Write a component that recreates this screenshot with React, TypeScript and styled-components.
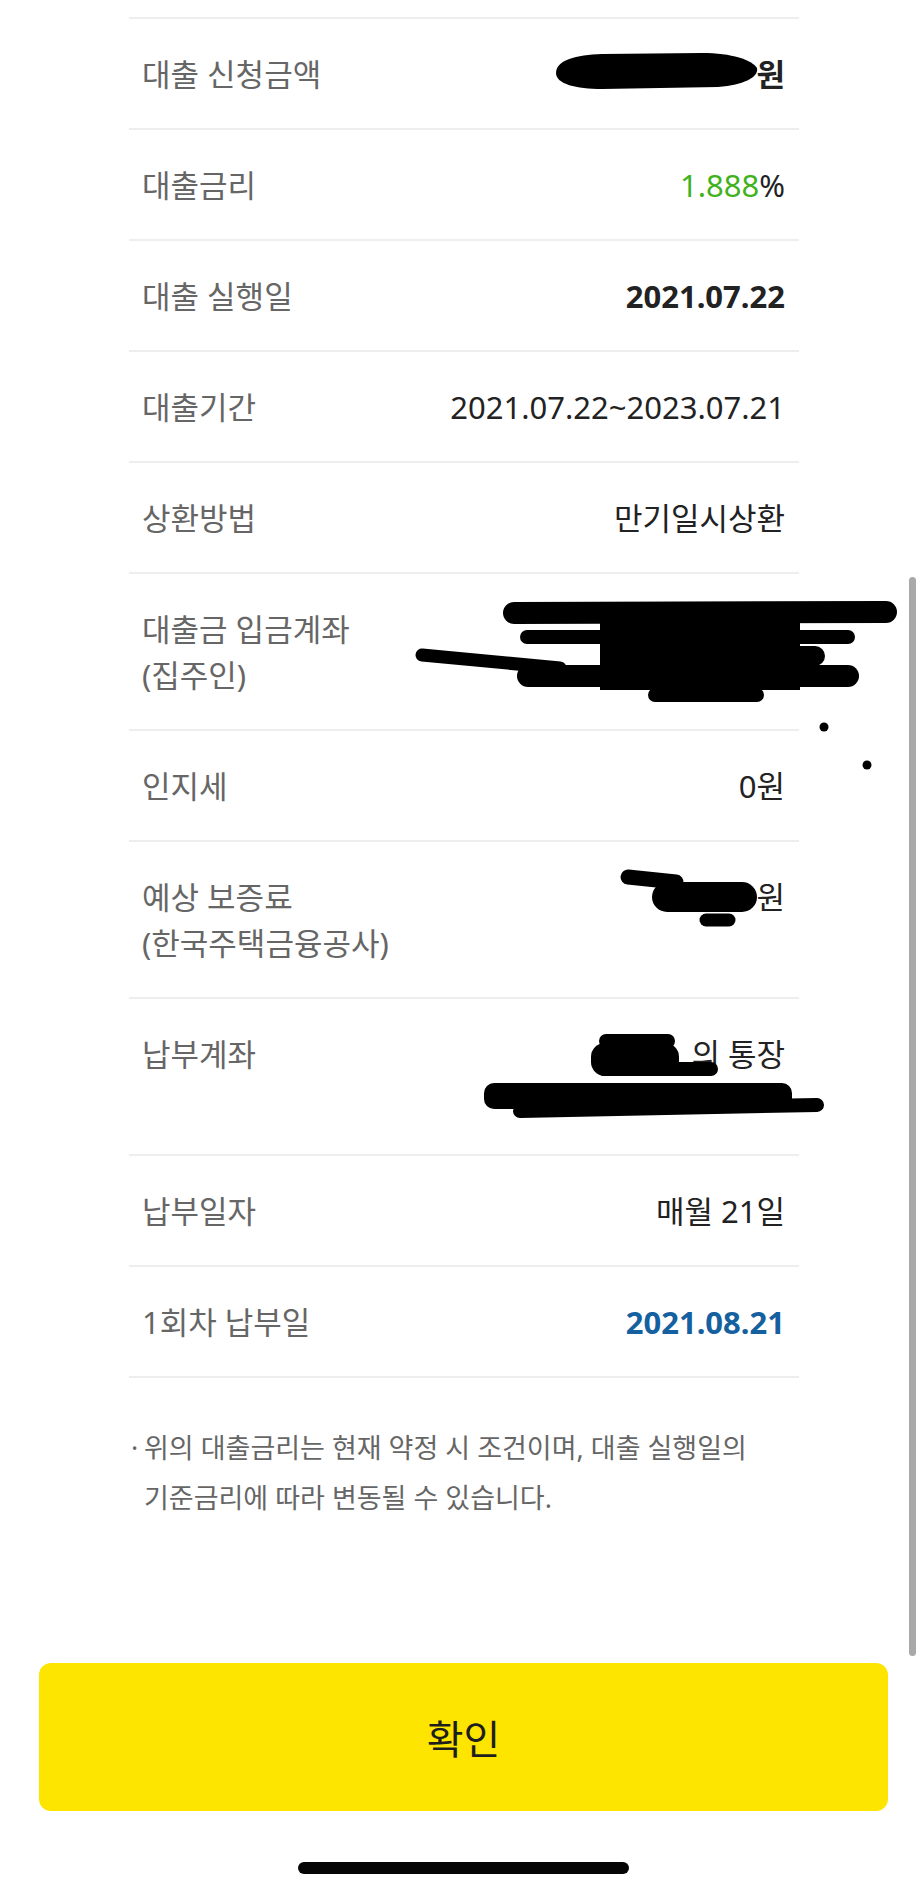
import React from "react";
import styled, { createGlobalStyle } from "styled-components";

const GlobalStyle = createGlobalStyle`
  body {
    margin: 0;
    background: #ffffff;
    font-family: "Noto Sans", "Noto Sans CJK KR", sans-serif;
    overflow: hidden;
  }
`;

const Page = styled.div`
  position: relative;
  width: 922px;
  height: 1895px;
  padding-top: 17px;
  box-sizing: border-box;
  display: flex;
  flex-direction: column;
  background: #ffffff;
`;

const List = styled.div`
  margin-left: 129px;
  width: 670px;
  border-top: 2px solid #eeeeee;
`;

const Row = styled.div`
  display: flex;
  justify-content: space-between;
  align-items: flex-start;
  padding: 32px 14px 31px 13px;
  border-bottom: 2px solid #eeeeee;
  font-size: 31px;
  line-height: 46px;
`;

const Label = styled.div`
  color: #666666;
`;

const Value = styled.div<{ $tone?: "bold" | "green" | "blue" }>`
  text-align: right;
  color: ${({ $tone }) => ($tone === "blue" ? "#15609f" : "#222222")};
  font-weight: ${({ $tone }) => ($tone === "bold" || $tone === "blue" ? 700 : 400)};
`;

const Green = styled.span`
  color: #3fb21c;
`;

const Note = styled.div`
  display: flex;
  margin-left: 129px;
  width: 670px;
  padding-top: 45px;
  font-size: 27px;
  line-height: 50px;
  color: #666666;
`;

const Bullet = styled.span`
  width: 13px;
  flex-shrink: 0;
  padding-left: 2px;
`;

const ConfirmButton = styled.button`
  margin: 140px 0 0 39px;
  width: 849px;
  height: 148px;
  border: none;
  border-radius: 12px;
  background: #fee500;
  color: #1e1e1e;
  font-family: "Noto Sans", "Noto Sans CJK KR", sans-serif;
  font-size: 40px;
`;

const HomeBar = styled.div`
  margin: 51px 0 0 298px;
  width: 331px;
  height: 12px;
  border-radius: 6px;
  background: #050505;
`;

const ScrollThumb = styled.div`
  position: absolute;
  left: 909px;
  top: 577px;
  width: 7px;
  height: 1079px;
  border-radius: 4px;
  background: #a9a9a9;
`;

const Scribbles = styled.svg`
  position: absolute;
  left: 0;
  top: 0;
  pointer-events: none;
`;

type Item = { label: React.ReactNode; value?: React.ReactNode; tone?: "bold" | "green" | "blue" };

const items: Item[] = [
  { label: "대출 신청금액", value: "원", tone: "bold" },
  { label: "대출금리", value: <><Green>1.888</Green>%</> },
  { label: "대출 실행일", value: "2021.07.22", tone: "bold" },
  { label: "대출기간", value: "2021.07.22~2023.07.21" },
  { label: "상환방법", value: "만기일시상환" },
  { label: <>대출금 입금계좌<br />(집주인)</> },
  { label: "인지세", value: "0원" },
  { label: <>예상 보증료<br />(한국주택금융공사)</>, value: "원" },
  { label: "납부계좌", value: <>의 통장<br />&nbsp;</> },
  { label: "납부일자", value: "매월 21일" },
  { label: "1회차 납부일", value: "2021.08.21", tone: "blue" },
];

// the marker strokes that hide personal data in the screenshot
const Redactions = () => (
  <Scribbles width={922} height={1895} viewBox="0 0 922 1895">
    <g fill="#000" stroke="#000" strokeLinecap="round">
      <path
        stroke="none"
        d="M556,73 C556,60 576,55 602,54 L702,53 C732,53 752,60 757,68 C759,77 744,85 718,87 L602,89 C576,89 556,84 556,73 Z"
      />

      <line x1={514} y1={613} x2={886} y2={612} strokeWidth={22} />
      <line x1={527} y1={637} x2={848} y2={637} strokeWidth={14} />
      <line x1={422} y1={655} x2={560} y2={668} strokeWidth={13} />
      <line x1={528} y1={676} x2={848} y2={676} strokeWidth={22} />
      <line x1={640} y1={656} x2={815} y2={656} strokeWidth={20} />
      <rect x={600} y={612} width={200} height={78} stroke="none" />
      <line x1={655} y1={695} x2={757} y2={695} strokeWidth={14} />
      <circle cx={824} cy={727} r={4.5} stroke="none" />
      <circle cx={867} cy={765} r={4.5} stroke="none" />

      <line x1={628} y1={877} x2={676} y2={882} strokeWidth={15} />
      <line x1={667} y1={897} x2={742} y2={897} strokeWidth={30} />
      <line x1={706} y1={920} x2={729} y2={920} strokeWidth={13} />

      <line x1={606} y1={1041} x2={668} y2={1041} strokeWidth={14} />
      <rect x={591} y={1043} width={88} height={33} rx={14} stroke="none" />
      <line x1={604} y1={1069} x2={711} y2={1069} strokeWidth={14} />
      <rect x={484} y={1083} width={308} height={26} rx={10} stroke="none" />
      <line x1={520} y1={1111} x2={817} y2={1105} strokeWidth={14} />
    </g>
  </Scribbles>
);

export default function App() {
  return (
    <Page>
      <GlobalStyle />
      <List>
        {items.map((item, i) => (
          <Row key={i}>
            <Label>{item.label}</Label>
            <Value $tone={item.tone}>{item.value}</Value>
          </Row>
        ))}
      </List>
      <Note>
        <Bullet>·</Bullet>
        <span>
          위의 대출금리는 현재 약정 시 조건이며, 대출 실행일의
          <br />
          기준금리에 따라 변동될 수 있습니다.
        </span>
      </Note>
      <ConfirmButton>확인</ConfirmButton>
      <HomeBar />
      <ScrollThumb />
      <Redactions />
    </Page>
  );
}
